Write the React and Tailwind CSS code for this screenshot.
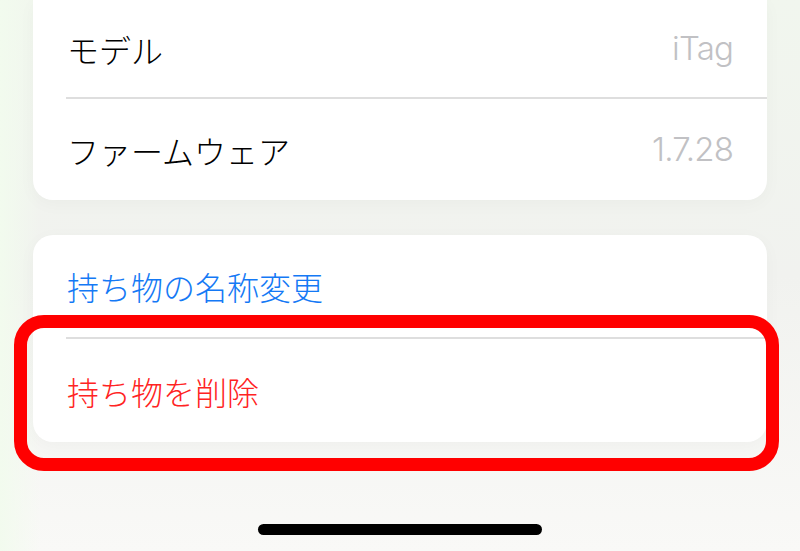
export default function App() {
  const font = { fontFamily: '"Noto Sans CJK JP", "Noto Sans", sans-serif' }
  const valueFont = { fontFamily: 'Inter, "Noto Sans", sans-serif' }

  return (
    <div className="relative w-[800px] h-[551px] overflow-hidden bg-gradient-to-b from-[#f1f6ee] via-[#f1f2ef] to-[#f9f9f7]" style={font}>
      <div className="absolute inset-y-0 left-0 w-[40px] bg-gradient-to-r from-[#f2fbee] to-transparent"></div>

      <div className="relative flex flex-col px-[33px]">
        {/* Info card (top cut off) */}
        <section className="bg-white rounded-b-[20px] shadow-[0_4px_18px_rgba(0,0,0,0.03)]">
          <div className="h-[97px] flex items-center justify-between pl-[34px] pr-[34px]">
            <span className="text-[32px] leading-none font-light text-black">モデル</span>
            <span className="text-[33px] leading-none font-light text-[#c1c1c4] tracking-tight" style={valueFont}>iTag</span>
          </div>
          <div className="ml-[33px] h-[2px] bg-[#dedede]"></div>
          <div className="h-[101px] flex items-center justify-between pl-[34px] pr-[34px]">
            <span className="text-[32px] leading-none font-light text-black">ファームウェア</span>
            <span className="text-[33px] leading-none font-light text-[#c1c1c4] tracking-tight" style={valueFont}>1.7.28</span>
          </div>
        </section>

        {/* Actions card */}
        <section className="mt-[35px] bg-white rounded-[20px] shadow-[0_4px_18px_rgba(0,0,0,0.03)]">
          <div className="h-[102px] flex items-center pl-[34px]">
            <span className="text-[32px] leading-none font-light text-[#1479f5]">持ち物の名称変更</span>
          </div>
          <div className="ml-[33px] h-[2px] bg-[#dedede]"></div>
          <div className="h-[103px] flex items-center pl-[34px]">
            <span className="text-[32px] leading-none font-light text-[#ff2323]">持ち物を削除</span>
          </div>
        </section>
      </div>

      {/* annotation highlight */}
      <div className="absolute left-[14px] top-[315px] w-[765px] h-[156px] border-[13px] border-[#ff0000] rounded-[30px]"></div>

      {/* home indicator */}
      <div className="absolute left-[258px] top-[524px] w-[284px] h-[11px] rounded-full bg-black"></div>
    </div>
  )
}
